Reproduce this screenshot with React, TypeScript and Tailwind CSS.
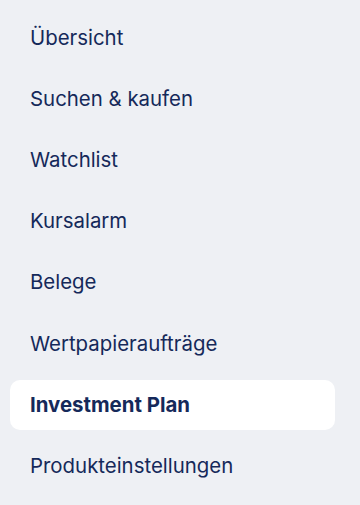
import React from "react";

const items = [
  "Übersicht",
  "Suchen & kaufen",
  "Watchlist",
  "Kursalarm",
  "Belege",
  "Wertpapieraufträge",
  "Investment Plan",
  "Produkteinstellungen",
];

export default function App() {
  return (
    <div className="w-[360px] h-[505px] bg-[#eef0f4] overflow-hidden" style={{ fontFamily: "Inter, 'Noto Sans', sans-serif" }}>
      <ul className="flex flex-col pt-[13px] pl-[10px] pr-[25px] gap-[11.2px]">
        {items.map((it) => {
          const active = it === "Investment Plan";
          return (
            <li
              key={it}
              className={`h-[50px] flex items-center pl-[20px] rounded-[10px] text-[20.4px] text-[#15295a] ${
                active ? "bg-white font-bold" : "font-normal"
              }`}
            >
              {it}
            </li>
          );
        })}
      </ul>
    </div>
  );
}
